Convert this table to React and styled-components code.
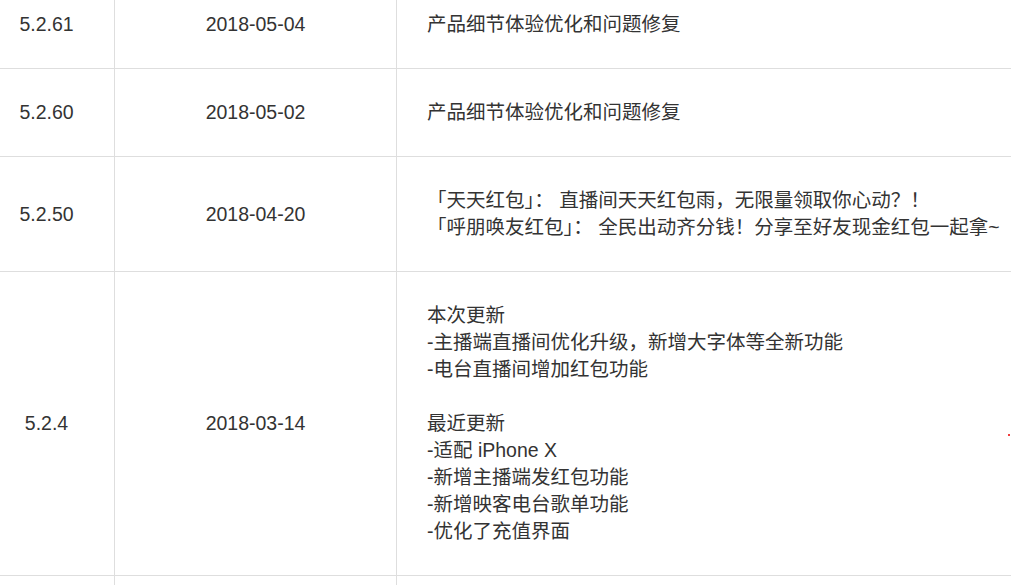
import React from 'react'
import styled, { createGlobalStyle } from 'styled-components'

const GlobalStyle = createGlobalStyle`
    html, body {
        margin: 0;
        padding: 0;
        background: #fff;
        overflow: hidden;
    }
    body {
        font-family: 'Liberation Sans', 'Noto Sans CJK SC', sans-serif;
    }
`
const Page = styled.div`
    width: 1011px;
    height: 585px;
    overflow: hidden;
    position: relative;
`
const Scroller = styled.div`
    margin: -20px 0 0 -22px;
`
const Table = styled.table`
    border-collapse: collapse;
    table-layout: fixed;
    width: 1120px;
    color: #333;
    font-size: 19.5px;
    line-height: 27px;
`
const Cell = styled.td`
    border: 1px solid #dedede;
    padding: 30px ${p => (p.$left ? '30px' : '0')};
    text-align: ${p => (p.$left ? 'left' : 'center')};
    vertical-align: middle;
    white-space: nowrap;
`
const Line = styled.div`
    min-height: 27px;
`
const Dot = styled.span`
    position: absolute;
    left: 1008px;
    top: 434px;
    width: 2px;
    height: 2px;
    background: #f03c3c;
`

const releases = [
  { version: '5.2.61', date: '2018-05-04', notes: ['产品细节体验优化和问题修复'] },
  { version: '5.2.60', date: '2018-05-02', notes: ['产品细节体验优化和问题修复'] },
  {
    version: '5.2.50',
    date: '2018-04-20',
    notes: [
      '「天天红包」： 直播间天天红包雨，无限量领取你心动？！',
      '「呼朋唤友红包」： 全民出动齐分钱！分享至好友现金红包一起拿~',
    ],
  },
  {
    version: '5.2.4',
    date: '2018-03-14',
    notes: [
      '本次更新',
      '-主播端直播间优化升级，新增大字体等全新功能',
      '-电台直播间增加红包功能',
      '',
      '最近更新',
      '-适配 iPhone X',
      '-新增主播端发红包功能',
      '-新增映客电台歌单功能',
      '-优化了充值界面',
    ],
  },
  { version: '', date: '', notes: [''] },
]

function App() {
  return (
    <Page>
      <GlobalStyle />
      <Scroller>
        <Table>
          <colgroup>
            <col style={{ width: 136 }} />
            <col style={{ width: 282 }} />
            <col />
          </colgroup>
          <tbody>
            {releases.map((r, i) => (
              <tr key={i}>
                <Cell>{r.version}</Cell>
                <Cell>{r.date}</Cell>
                <Cell $left>
                  {r.notes.map((n, j) => (
                    <Line key={j}>{n}</Line>
                  ))}
                </Cell>
              </tr>
            ))}
          </tbody>
        </Table>
      </Scroller>
      <Dot />
    </Page>
  )
}

export default App
